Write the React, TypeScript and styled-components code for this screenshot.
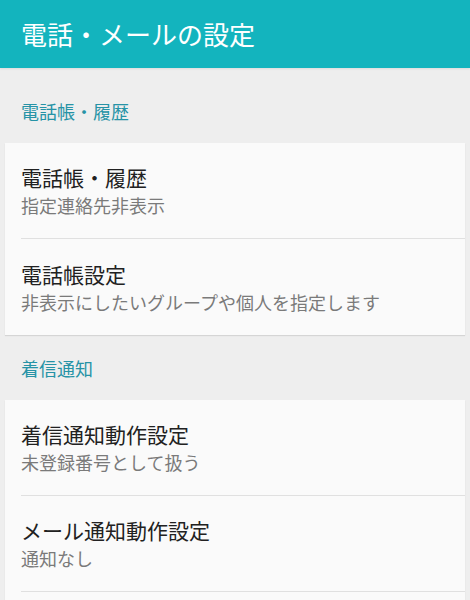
import React from "react";
import styled, { createGlobalStyle } from "styled-components";

const GlobalStyle = createGlobalStyle`
  html, body {
    margin: 0;
    padding: 0;
    overflow: hidden;
    background: #eeeeee;
  }
  body {
    font-family: "Noto Sans CJK JP", "Noto Sans", Roboto, sans-serif;
  }
`;

const Screen = styled.div`
  width: 470px;
  height: 600px;
  display: flex;
  flex-direction: column;
  background: #eeeeee;
  overflow: hidden;
`;

const AppBar = styled.header`
  height: 68px;
  flex-shrink: 0;
  display: flex;
  align-items: center;
  padding-left: 21px;
  background: #13b4be;
  color: #ffffff;
  font-size: 26px;
  line-height: 1;
  box-shadow: 0 1px 2px rgba(0, 0, 0, 0.08);
  position: relative;
  z-index: 1;
`;

const List = styled.main`
  flex: 1;
  display: flex;
  flex-direction: column;
  padding-top: 10px;
`;

const SectionHeader = styled.div`
  height: 65px;
  flex-shrink: 0;
  display: flex;
  align-items: center;
  padding-left: 21px;
  color: #2693a6;
  font-size: 18px;
  line-height: 1;
`;

const Card = styled.section<{ $grow?: boolean }>`
  margin: 0 5px;
  background: #fafafa;
  box-shadow: 0 1px 1px rgba(0, 0, 0, 0.1);
  display: flex;
  flex-direction: column;
  flex-shrink: 0;
  ${(p) => (p.$grow ? "flex-grow: 1;" : "")}
`;

const Row = styled.div`
  padding-left: 16px;
`;

const RowInner = styled.div<{ $divider: boolean }>`
  height: 96px;
  box-sizing: border-box;
  display: flex;
  flex-direction: column;
  justify-content: center;
  border-bottom: ${(p) => (p.$divider ? "1px solid #e0e0e0" : "none")};
`;

const Title = styled.div`
  font-size: 21px;
  line-height: 30px;
  color: #212121;
`;

const Summary = styled.div`
  font-size: 18px;
  line-height: 27px;
  color: #7a7a7a;
`;

type Item = { title: string; summary: string; divider: boolean };

const Pref = ({ title, summary, divider }: Item) => (
  <Row>
    <RowInner $divider={divider}>
      <Title>{title}</Title>
      <Summary>{summary}</Summary>
    </RowInner>
  </Row>
);

const contacts: Item[] = [
  { title: "電話帳・履歴", summary: "指定連絡先非表示", divider: true },
  { title: "電話帳設定", summary: "非表示にしたいグループや個人を指定します", divider: false },
];

const notify: Item[] = [
  { title: "着信通知動作設定", summary: "未登録番号として扱う", divider: true },
  { title: "メール通知動作設定", summary: "通知なし", divider: true },
];

export default function App() {
  return (
    <>
      <GlobalStyle />
      <Screen>
        <AppBar>電話・メールの設定</AppBar>
        <List>
          <SectionHeader>電話帳・履歴</SectionHeader>
          <Card>
            {contacts.map((it) => (
              <Pref key={it.title} {...it} />
            ))}
          </Card>
          <SectionHeader>着信通知</SectionHeader>
          <Card $grow>
            {notify.map((it) => (
              <Pref key={it.title} {...it} />
            ))}
          </Card>
        </List>
      </Screen>
    </>
  );
}
